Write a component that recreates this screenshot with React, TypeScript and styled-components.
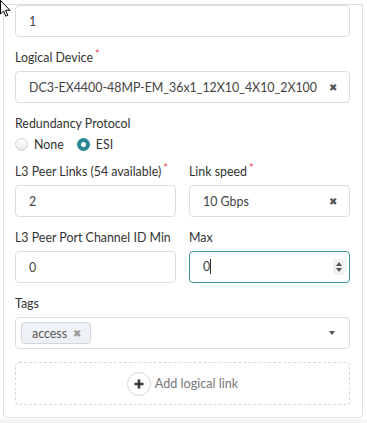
import React from "react";
import styled, { createGlobalStyle } from "styled-components";

const GlobalStyle = createGlobalStyle`
  html, body { margin: 0; padding: 0; background: #ffffff; }
  body { font-family: Lato, "Open Sans", sans-serif; color: #333; }
  * { box-sizing: border-box; }
`;

const Page = styled.div`
  position: relative;
  width: 367px;
  height: 423px;
  overflow: hidden;
  background: #ffffff;
  display: flex;
  flex-direction: column;
  padding-top: 4px;
`;

const Card = styled.div`
  margin-left: 3px;
  width: 360px;
  border: 1px solid #dcdfe6;
  border-radius: 0 0 4px 4px;
  background: #fff;
  padding: 0 12px 12px 11px;
  display: flex;
  flex-direction: column;
`;

const Footer = styled.div`
  flex: 1;
  background: #f4f5f7;
  margin-top: 1px;
`;

const Group = styled.div<{ $mb?: number }>`
  display: flex;
  flex-direction: column;
  margin-bottom: ${(p) => (p.$mb ?? 12)}px;
`;

const Row = styled.div`
  display: grid;
  grid-template-columns: 1fr 1fr;
  column-gap: 13px;
`;

const Label = styled.div<{ $mb?: number }>`
  font-size: 12.4px;
  line-height: 18px;
  color: #333;
  margin-bottom: ${(p) => (p.$mb ?? 4)}px;
  white-space: nowrap;
`;

const Req = styled.span`
  color: #e0474c;
  font-size: 11px;
  position: relative;
  top: -4px;
  margin-left: 2px;
`;

const Field = styled.div<{ $focused?: boolean }>`
  position: relative;
  height: 32px;
  border: 1px solid ${(p) => (p.$focused ? "#3d939d" : "#dadde3")};
  border-radius: 4px;
  background: #fff;
  display: flex;
  align-items: center;
  padding: 0 12px 0 13px;
  font-size: 12.4px;
  color: #444;
`;

const Value = styled.span`
  flex: 1;
  white-space: nowrap;
  overflow: hidden;
`;

const Caret = styled.span`
  display: inline-block;
  width: 1px;
  height: 15px;
  background: #333;
  vertical-align: middle;
  position: relative;
  top: -1px;
`;

const Clear = styled.span`
  font-size: 10px;
  color: #555;
  line-height: 1;
  margin-left: 8px;
`;

const Spinner = styled.div`
  width: 11px;
  height: 16px;
  background: #f1f1f1;
  display: flex;
  flex-direction: column;
  align-items: center;
  justify-content: center;
  gap: 2px;
  margin-right: -7px;
`;

const Tri = styled.span<{ $down?: boolean }>`
  width: 0;
  height: 0;
  border-left: 3.5px solid transparent;
  border-right: 3.5px solid transparent;
  ${(p) =>
    p.$down
      ? "border-top: 4px solid #555;"
      : "border-bottom: 4px solid #555;"}
`;

const RadioRow = styled.div`
  display: flex;
  align-items: center;
  height: 18px;
`;

const RadioItem = styled.label`
  display: flex;
  align-items: center;
  font-size: 12.4px;
  color: #333;
  margin-right: 13px;
`;

const RadioDot = styled.span<{ $checked?: boolean }>`
  width: 13px;
  height: 13px;
  border-radius: 50%;
  margin: 0 6px 0 0;
  ${(p) =>
    p.$checked
      ? "border: 4.5px solid #2b8793; background: #fff;"
      : "border: 1px solid #cfcfcf; background: linear-gradient(#ffffff, #e9e9e9);"}
`;

const TagsField = styled(Field)`
  padding: 0 12px 0 5px;
`;

const Chip = styled.span`
  display: inline-flex;
  align-items: center;
  height: 22px;
  padding: 0 9px 0 10px;
  background: #eef1f5;
  border: 1px solid #d2d7de;
  border-radius: 4px;
  font-size: 12.4px;
  color: #555;
  gap: 6px;
`;

const ChipX = styled.span`
  font-size: 10px;
  color: #999;
`;

const Spacer = styled.span`
  flex: 1;
`;

const DropCaret = styled.span`
  width: 0;
  height: 0;
  border-left: 3px solid transparent;
  border-right: 3px solid transparent;
  border-top: 4px solid #555;
  margin-right: 2px;
`;

const AddBox = styled.div`
  height: 43px;
  border: 1px dashed #d6d9df;
  border-radius: 4px;
  display: flex;
  align-items: center;
  justify-content: center;
  gap: 4px;
  margin-top: 1px;
`;

const PlusCircle = styled.span`
  width: 24px;
  height: 24px;
  border-radius: 50%;
  border: 1px solid #d6d6d6;
  background: #fff;
  display: flex;
  align-items: center;
  justify-content: center;
`;

const AddText = styled.span`
  font-size: 12.6px;
  color: #777;
`;

const Cursor = styled.svg`
  position: absolute;
  left: 0;
  top: 0;
`;

export default function App() {
  return (
    <>
      <GlobalStyle />
      <Page>
        <Card>
          <Group>
            <Field>
              <Value>1</Value>
            </Field>
          </Group>
          <Group>
            <Label>
              Logical Device<Req>*</Req>
            </Label>
            <Field>
              <Value>DC3-EX4400-48MP-EM_36x1_12X10_4X10_2X100</Value>
              <Clear>✖</Clear>
            </Field>
          </Group>
          <Group $mb={10}>
            <Label $mb={2}>Redundancy Protocol</Label>
            <RadioRow>
              <RadioItem>
                <RadioDot />
                None
              </RadioItem>
              <RadioItem>
                <RadioDot $checked />
                ESI
              </RadioItem>
            </RadioRow>
          </Group>
          <Row>
            <Group>
              <Label>
                L3 Peer Links (54 available)<Req>*</Req>
              </Label>
              <Field>
                <Value>2</Value>
              </Field>
            </Group>
            <Group>
              <Label>
                Link speed<Req>*</Req>
              </Label>
              <Field>
                <Value>10 Gbps</Value>
                <Clear>✖</Clear>
              </Field>
            </Group>
          </Row>
          <Row>
            <Group>
              <Label>L3 Peer Port Channel ID Min</Label>
              <Field>
                <Value>0</Value>
              </Field>
            </Group>
            <Group>
              <Label>Max</Label>
              <Field $focused>
                <Value>
                  0<Caret />
                </Value>
                <Spinner>
                  <Tri />
                  <Tri $down />
                </Spinner>
              </Field>
            </Group>
          </Row>
          <Group>
            <Label>Tags</Label>
            <TagsField>
              <Chip>
                access<ChipX>✖</ChipX>
              </Chip>
              <Spacer />
              <DropCaret />
            </TagsField>
          </Group>
          <AddBox>
            <PlusCircle>
              <svg width="12" height="12" viewBox="0 0 12 12">
                <path d="M6 1.5v9M1.5 6h9" stroke="#3a3a3a" strokeWidth="2.6" />
              </svg>
            </PlusCircle>
            <AddText>Add logical link</AddText>
          </AddBox>
        </Card>
        <Footer />
        <Cursor width="12" height="18" viewBox="0 0 12 18">
          <path
            d="M0.5 0.5 L0.5 14 L3.6 11 L5.8 16.2 L7.8 15.3 L5.6 10.3 L10 10.3 Z"
            fill="#fff"
            stroke="#000"
            strokeWidth="1"
            strokeLinejoin="round"
          />
        </Cursor>
      </Page>
    </>
  );
}
